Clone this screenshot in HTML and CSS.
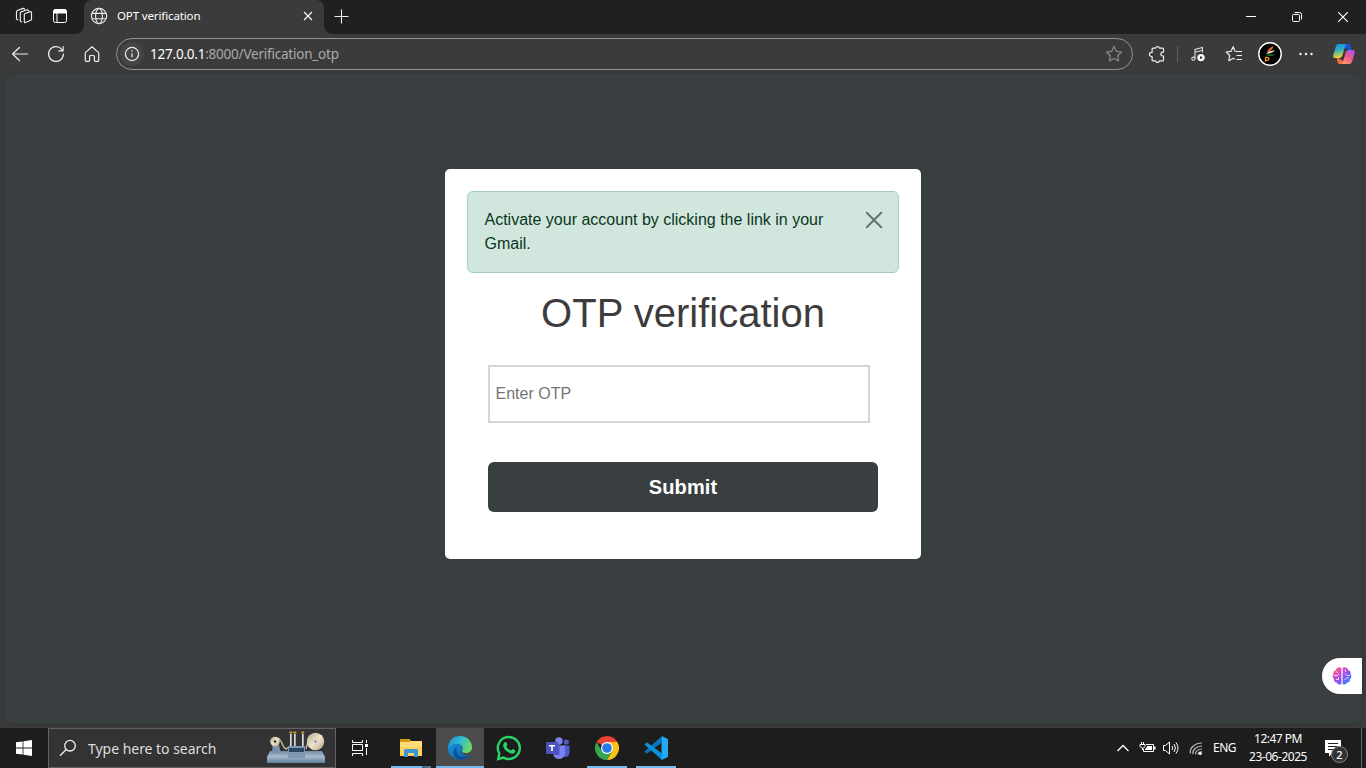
FILE: index.html
```html
<!DOCTYPE html>
<html lang="en">
<head>
<meta charset="utf-8">
<title>OPT verification</title>
<link rel="stylesheet" href="styles.css">
</head>
<body>
<div class="desktop">
  <header class="tabstrip">
    <span class="cell"><svg width="18" height="18" viewBox="0 0 18 18" fill="none" stroke="#eee" stroke-width="1.15" stroke-linejoin="round" stroke-linecap="round"><path d="M9.300 7.600c0-.5.3-.9.800-1.100l5.200-1.900c.7-.2 1.200.1 1.200.8v6.800c0 .5-.3.900-.8 1.100l-5.200 2.200c-.7.3-1.200-.1-1.200-.8z"/><path d="M6.600 14.800c-.7 0-1.300-.5-1.300-1.300V6.100c0-.6.4-1 .9-1.200l5-1.900c.9-.3 1.900 0 2.400.6"/><path d="M2.900 12.800c-.8 0-1.400-.6-1.400-1.300V4.800c0-.6.400-1.100.9-1.300l4.900-1.900c.9-.3 1.900 0 2.400.6"/></svg></span>
    <span class="cell"><svg width="16" height="16" viewBox="0 0 16 16" fill="none" stroke="#fff"><rect x="1.5" y="1.5" width="13" height="13" rx="2"/><path d="M1.5 3.3a2 2 0 012-1.8h9a2 2 0 012 1.8V5h-13z" fill="#fff"/><path d="M5 5v9.5"/></svg></span>
    <div class="tab">
      <svg width="18" height="18" viewBox="0 0 18 18" fill="none" stroke="#e8e8e8" stroke-width="1.15"><circle cx="9" cy="9" r="7.6"/><ellipse cx="9" cy="9" rx="3.4" ry="7.6"/><path d="M1.9 6.3h14.2M1.9 11.7h14.2"/></svg>
      <span class="tab-title">OPT verification</span>
      <svg class="tab-close" width="10" height="10" viewBox="0 0 10 10" stroke="#fff" stroke-width="1.1"><path d="M1 1l8 8M9 1L1 9"/></svg>
    </div>
    <span class="new-tab"><svg width="15" height="15" viewBox="0 0 15 15" stroke="#eee" stroke-width="1.1"><path d="M7.5.5v14M.5 7.5h14"/></svg></span>
    <div class="window-controls">
      <span><svg width="12" height="12" viewBox="0 0 12 12" stroke="#fff"><path d="M1 5.5h10"/></svg></span>
      <span><svg width="12" height="12" viewBox="0 0 12 12" fill="none" stroke="#fff"><rect x="1.5" y="3.5" width="7" height="7" rx="1"/><path d="M3.5 1.5h5a2 2 0 012 2v5"/></svg></span>
      <span><svg width="12" height="12" viewBox="0 0 12 12" stroke="#fff" stroke-width="1.15"><path d="M1.2 1.2l9.6 9.6M10.800 1.2l-9.6 9.6"/></svg></span>
    </div>
  </header>

  <nav class="toolbar">
    <span class="cell"><svg width="18" height="18" viewBox="0 0 18 18" fill="none" stroke="#eee" stroke-width="1.2" stroke-linecap="round" stroke-linejoin="round"><path d="M16.500 9H1.600M8.400 2.500L1.600 9l6.800 6.500"/></svg></span>
    <span class="cell"><svg width="18" height="18" viewBox="0 0 18 18" fill="none" stroke="#eee" stroke-width="1.2" stroke-linecap="round"><path d="M16.400 9A7.400 7.400 0 1114.700 4.300L16 5.700M16.100 1.500v4.300h-4.200"/></svg></span>
    <span class="cell"><svg width="18" height="18" viewBox="0 0 18 18" fill="none" stroke="#eee" stroke-width="1.2" stroke-linejoin="round"><path d="M2.300 7.600L9 1.800l6.700 5.800v7.800c0 .6-.4.9-.9.9h-2.600c-.5 0-.8-.3-.8-.8v-3.900c0-.7-.5-1.100-1.100-1.100H7.700c-.6 0-1.100.4-1.100 1.100v3.900c0 .5-.3.8-.8.8H3.200c-.5 0-.9-.3-.9-.9z"/></svg></span>
    <div class="address">
      <span class="site-info"><svg width="16" height="16" viewBox="0 0 16 16" fill="none" stroke="#eee"><circle cx="8" cy="8" r="6.6" stroke-width="1.2"/><path d="M8 7.200v4" stroke-width="1.2"/><circle cx="8" cy="5" r=".8" fill="#eee" stroke="none"/></svg></span>
      <span class="url"><b>127.0.0.1</b>:8000/Verification_otp</span>
      <svg class="favorite" width="18" height="18" viewBox="0 0 18 18" fill="none" stroke="#8c8c8c" stroke-width="1.2" stroke-linejoin="round"><path d="M9 1.500l2.300 4.800 5.200.7-3.800 3.700.9 5.300L9 13.500 4.400 16l.9-5.300L1.500 7l5.200-.7z"/></svg>
    </div>
    <span class="cell cell-after"><svg width="18" height="18" viewBox="0 0 18 18" fill="none" stroke="#eee" stroke-width="1.2" stroke-linejoin="round"><path d="M5 3.200h2.600a2 2 0 013.900 0h3.100c.5 0 .9.4.9.900v3.100h-.7a1.900 1.900 0 000 3.800h.7v4c0 .5-.4.900-.9.900h-3.100a2 2 0 01-3.900 0H5c-.5 0-.9-.4-.9-.9v-3.500h-.6a2 2 0 010-4.100h.6V4.100c0-.5.4-.9.900-.9z"/></svg></span>
    <i class="divider"></i>
    <span class="cell cell-music"><svg width="18" height="18" viewBox="0 0 18 18" fill="none" stroke="#ddd" stroke-width="1.1"><path d="M6 13.500V4.400l7.500-2v5M6 7.200l7.500-2"/><circle cx="4.400" cy="13.700" r="1.600"/><circle cx="12" cy="12.600" r="3.700" fill="#fff" stroke="none"/><path d="M11 10.900l3 1.700-3 1.700z" fill="#3b3b3b" stroke="none"/></svg></span>
    <span class="cell"><svg width="18" height="18" viewBox="0 0 18 18" fill="none" stroke="#eee" stroke-width="1.2" stroke-linejoin="round"><path d="M10.500 6.500H17M11.500 10.500H17M11.500 14.500H17M10.200 6.500L8.200 1.700 6 6.300 1.200 7l3.500 3.500-.9 5.200 4.400-2.400 1.500.8"/></svg></span>
    <span class="cell"><svg width="24" height="24" viewBox="0 0 24 24"><circle cx="12" cy="12" r="11.2" fill="#000" stroke="#fff" stroke-width="1.4"/><path d="M9 10.500C10 7 12.500 5.500 15.500 4 15 7 12.500 9 9 10.500z" fill="#f26a2b"/><path d="M8 11.800c2.300-2.300 5-3.400 9-3.200-2.500 2.300-6 3-9 3.200z" fill="#eee"/><path d="M7.500 12.900c3.300-.7 6.400-1.200 10-.2-3 1.700-6.500 1.200-10 .2z" fill="#20872f"/><path d="M7.500 19.800v-4.300h2a1.400 1.400 0 010 2.800H8" fill="none" stroke="#ee8b20" stroke-width="1.3"/></svg></span>
    <span class="cell"><svg width="16" height="4" viewBox="0 0 16 4" fill="#eee"><circle cx="2.500" cy="2" r="1.25"/><circle cx="8" cy="2" r="1.25"/><circle cx="13.500" cy="2" r="1.25"/></svg></span>
    <span class="cell cell-copilot"><svg width="24" height="22" viewBox="0 0 24 22"><defs><linearGradient id="cpa" x1="0" y1="0" x2=".2" y2="1"><stop offset="0" stop-color="#168cf0"/><stop offset=".5" stop-color="#31b0bb"/><stop offset="1" stop-color="#edd333"/></linearGradient><linearGradient id="cpb" x1=".8" y1="0" x2=".2" y2="1"><stop offset="0" stop-color="#a653ef"/><stop offset=".5" stop-color="#ef568e"/><stop offset="1" stop-color="#ff9d69"/></linearGradient></defs><path d="M12 1h4.200c1.300 0 1.800.7 2.100 1.700L19.700 7h-3.500l-4-3z" fill="#1755d8"/><path d="M4.500 14l6.300 3.800 1.200 3.200H7.700c-1.200 0-1.800-.8-2.100-1.800z" fill="#f26a44"/><path d="M6.700 1H15c-1.200.3-1.700 1.400-2.100 2.800L10.800 11c-.8 2.700-1.700 4-4 4H3.400c-2 0-2.700-1.400-2-3.600L3.700 4C4.400 2 5.200 1 6.700 1z" fill="url(#cpa)"/><path d="M17.300 21H9c1.200-.3 1.700-1.400 2.100-2.800l2.100-7.200c.8-2.700 1.700-4 4-4h3.400c2 0 2.700 1.400 2 3.600L20.300 18c-.7 2-1.500 3-3 3z" fill="url(#cpb)"/></svg></span>
  </nav>

  <main class="page">
    <section class="card">
      <div class="alert">
        <p>Activate your account by clicking the link in your Gmail.</p>
        <svg width="18" height="18" viewBox="0 0 18 18" stroke="#68736e" stroke-width="2" stroke-linecap="round"><path d="M1.800 1.800l14.400 14.400M16.200 1.800L1.800 16.200"/></svg>
      </div>
      <h1>OTP verification</h1>
      <input class="otp" type="text" placeholder="Enter OTP">
      <button class="submit" type="button">Submit</button>
    </section>
    <div class="assistant"><svg width="20" height="20" viewBox="0 0 20 20"><defs><linearGradient id="brain" x1="0" y1="0" x2="1" y2="1"><stop offset="0" stop-color="#ff8a3b"/><stop offset=".3" stop-color="#e44bc3"/><stop offset=".6" stop-color="#8155f5"/><stop offset="1" stop-color="#2196fa"/></linearGradient></defs><path d="M9.400 2v16c-2 1.100-4.100.3-4.600-1.500-2 0-3-1.500-2.600-3.100C.3 12.400.2 9 1.500 8 .9 6.100 2 4.500 3.700 4.300 4.300 1.500 7.500.3 9.400 2zM10.600 2v16c2 1.100 4.100.3 4.600-1.500 2 0 3-1.500 2.600-3.100 1.900-1 2-4.400.7-5.400.6-1.900-.5-3.500-2.200-3.700C15.700 1.500 12.500.3 10.600 2z" fill="url(#brain)"/><path d="M2 9.500h3.500L7 8M4.500 5.500L6 7M4 13.500h2.500V11M18 9.500h-3L13 7.500M12.500 14l2-2h2M13.500 3.500V6" fill="none" stroke="#fff" stroke-width=".8"/></svg></div>
  </main>

  <footer class="taskbar">
    <span class="task-cell"><svg width="16" height="16" viewBox="0 0 16 16" fill="#fff"><path d="M0 2.300l6.600-.9v6.200H0zM7.400 1.300L16 0v7.600H7.400zM0 8.400h6.600v6.200L0 13.700zM7.400 8.400H16V16l-8.600-1.300z"/></svg></span>
    <div class="search">
      <svg width="18" height="18" viewBox="0 0 18 18" fill="none" stroke="#eee" stroke-width="1.3"><circle cx="11" cy="6.700" r="5.300"/><path d="M7.200 10.500L1 16.700"/></svg>
      <span>Type here to search</span>
      <svg class="search-art" width="60" height="36" viewBox="0 0 60 36"><defs><linearGradient id="steel" x1="0" y1="0" x2="0" y2="1"><stop offset="0" stop-color="#718ba8"/><stop offset=".45" stop-color="#a9bacb"/><stop offset="1" stop-color="#607e9c"/></linearGradient><linearGradient id="disc" x1="0" y1="0" x2="1" y2="1"><stop offset="0" stop-color="#b3a68b"/><stop offset=".5" stop-color="#eee4cb"/><stop offset="1" stop-color="#b4a488"/></linearGradient></defs><path d="M4 21h52l3 6v6H1v-6z" fill="url(#steel)"/><path d="M6 23l1-12h5l3 12z" fill="#7890aa"/><path d="M12 8c5 3 4 10 8 11l4-3M40 19L43 8" fill="none" stroke="#c9bea6" stroke-width="1.300"/><circle cx="9" cy="11.500" r="4.800" fill="url(#disc)"/><circle cx="9" cy="11.500" r="1.200" fill="#222"/><g fill="#d5dce0"><path d="M24 4h1.700v14H24zM28 4h1.700v14H28zM36 4h1.700v14H36z"/></g><path d="M23.300 1.500h3v2h-3zM27.300 1.500h3v2h-3zM35.300 1.500h3v2h-3z" fill="#c99b38"/><path d="M22 16h17v12H22z" fill="#8199b1"/><path d="M23 18h15v4H23z" fill="#294963"/><circle cx="49.500" cy="11.500" r="8.700" fill="url(#disc)"/><circle cx="49.500" cy="11.500" r="2.200" fill="#d3c9dc"/><circle cx="49.500" cy="11.500" r=".7" fill="#554b5c"/></svg>
    </div>
    <span class="task-cell"><svg width="18" height="18" viewBox="0 0 18 18" fill="none" stroke="#fff"><path d="M1.500 1v2.500h10V1M1.500 17v-2.500h10V17M1.500 5.500h10v6h-10zM15.500 1v3M15.500 9v7"/><path d="M14 5h3v3h-3z" fill="#fff" stroke="none"/></svg></span>
    <div class="apps">
      <span class="app running stacked"><svg width="22" height="20" viewBox="0 0 22 20"><path d="M0 1h9l2 2h11v15H0z" fill="#ffd35b"/><path d="M0 1h9l1 3H0z" fill="#d99a13"/><path d="M0 4h10l1-1h11v6H0z" fill="#ffdc76"/><path d="M4 19v-7l1-1h12l1 1v7h-4v-4H8v4z" fill="#3c97d5"/></svg></span>
      <span class="app running active"><svg width="26" height="26" viewBox="0 0 26 26"><defs><linearGradient id="edgeTop" x1="0" y1=".3" x2="1" y2=".6"><stop offset="0" stop-color="#2391d3"/><stop offset=".5" stop-color="#31bdd3"/><stop offset="1" stop-color="#75dc59"/></linearGradient><linearGradient id="edgeBlue" x1="0" y1="0" x2="1" y2="1"><stop offset="0" stop-color="#1595dc"/><stop offset="1" stop-color="#0b5caa"/></linearGradient></defs><path d="M1 13C2 8 9 5 14 9l1 5-1 3c2 4 6 4 9.300 2.400C21 23 17.500 25 13.200 25A12 12 0 011 13z" fill="url(#edgeBlue)"/><path d="M1 13C1.300 5.500 6.400 1 13 1c7.500 0 12 5.500 12 11.200 0 3.600-2.800 5.800-6 5.800-2.400 0-4.300-.8-4.300-2 0-.6 1-.9 1-2.600 0-2.700-2.600-4.600-5.500-4.600C6.100 8.800 2.900 10 1 13z" fill="url(#edgeTop)"/><path d="M10.500 11.200c-3.200 4 .1 10.500 5.500 10.500 3.100 0 5.500-1 7.300-2.300C21.200 23 17.500 25 13.200 25c-6-.7-9.700-9.800-2.700-13.800z" fill="#124f91"/></svg></span>
      <span class="app"><svg width="26" height="26" viewBox="0 0 26 26"><path d="M3.300 18.500A11 11 0 117.500 22.600L2.200 24z" fill="none" stroke="#25d366" stroke-width="2.400"/><path d="M8.800 7.200c.4-.4 1.300-.5 1.600.2l.9 2.200c.2.500-.9 1.500-.9 1.800 1.200 2 2.500 3.200 4.500 4 .5.200 1.300-1.500 1.900-1.300l2.300 1.100c.7.300.1 2-.5 2.600-1.200 1.200-3.200 1.100-5.300 0-2.800-1.300-4.400-3.100-5.700-5.400-1-1.800-.4-4 1.200-5.200z" fill="#25d366"/></svg></span>
      <span class="app"><svg width="26" height="24" viewBox="0 0 26 24"><circle cx="14" cy="5" r="3.700" fill="#7b83eb"/><circle cx="21.300" cy="6" r="2.600" fill="#5059c9"/><path d="M17 9.500h7.500V17c0 2.300-1.800 4-4 4S17 20 17 17z" fill="#5059c9"/><path d="M8 9.500h12V17c0 3.500-2.500 6-6 6s-6-2.500-6-6z" fill="#7b83eb"/><path d="M8 9.500h6.500V19H8z" fill="#5059c9"/><rect x="1" y="6" width="12" height="12" rx="1" fill="#4b53bc"/><path d="M4 9h6v1.500H7.800V15H6.200v-4.500H4z" fill="#fff"/></svg></span>
      <span class="app running"><svg width="26" height="26" viewBox="0 0 26 26"><path d="M13 13L2.600 7A12 12 0 0123.400 7z" fill="#ea4335"/><path d="M13 7h10.400A12 12 0 0113 25l5.200-9z" fill="#fbc116"/><path d="M7.800 16L2.600 7A12 12 0 0013 25l5.200-9z" fill="#34a853"/><circle cx="13" cy="13" r="6" fill="#fff"/><circle cx="13" cy="13" r="4.800" fill="#2978e8"/></svg></span>
      <span class="app running"><svg width="26" height="26" viewBox="0 0 26 26"><path d="M18.500 1L25 4v18l-6.500 3z" fill="#25a8f2"/><path d="M19 1L1.500 16.500l2.200 2.300L19 7.500z" fill="#0874bd"/><path d="M19 25L1.500 9.500l2.200-2.300L19 18.500z" fill="#0c91db"/></svg></span>
    </div>
    <div class="tray">
      <svg class="chevron" width="14" height="10" viewBox="0 0 14 10" fill="none" stroke="#fff" stroke-width="1.300"><path d="M1.500 8L7 2.500 12.500 8"/></svg>
      <svg class="battery" width="18" height="14" viewBox="0 0 18 14" fill="none" stroke="#fff"><path d="M7 3.500h7.500v7h-10V8"/><path d="M8 5h5v4H6V8l2-2zM15 5.500h1.500v3H15z" fill="#fff" stroke="none"/><path d="M1 3.500h5v2L4.500 7h-2L1 5.500zM2.500 3V1M4.500 3V1M3.500 7v2"/></svg>
      <svg class="volume" width="18" height="16" viewBox="0 0 18 16" fill="none" stroke="#fff"><path d="M1.500 5.500h2L7.500 2v12l-4-3.500h-2z"/><path d="M10 6q1.500 2 0 4M12 4q3 4 0 8M14 2.500q4 5.500 0 11"/></svg>
      <svg class="wifi" width="16" height="16" viewBox="0 0 16 16" fill="none" stroke="#bbb" stroke-width="1.200"><path d="M2.500 13.500C1 8 7 3 14 3M5 14c-1-4 3.500-8 9-8M7.500 14.300C7 11.500 10 9 14 9M10 14.500c0-1.700 1.500-2.700 4-2.700"/><circle cx="12.300" cy="13.500" r="1.500" fill="#fff" stroke="none"/></svg>
      <span class="language">ENG</span>
      <div class="clock"><span class="time">12:47 PM</span><span class="date">23-06-2025</span></div>
      <div class="notice"><svg width="18" height="18" viewBox="0 0 18 18"><path d="M1 1h16v13H9l-4 3.500V14H1z" fill="#fff"/><path d="M4 4.500h10M4 7.500h10M4 10.500h6" stroke="#222"/></svg><b>2</b></div>
      <i class="show-desktop"></i>
    </div>
  </footer>
</div>
</body>
</html>
```

FILE: styles.css
```css
* { box-sizing: border-box; }
body { margin: 0; font-family: "Noto Sans", sans-serif; background: #3b3b3b; overflow: hidden; }
svg { display: block; flex: none; }
.desktop { display: flex; flex-direction: column; width: 1366px; height: 768px; }

.tabstrip { display: flex; height: 34px; padding-left: 6px; background: #202020; }
.cell { display: flex; flex: none; align-items: center; justify-content: center; width: 36px; }
.tabstrip .cell { height: 32px; }
.tab { position: relative; display: flex; align-items: center; width: 240px; height: 34px; margin-left: 6px; padding: 0 11px 2px 6px; background: #3b3b3b; border-radius: 8px 8px 0 0; }
.tab::before, .tab::after { content: ""; position: absolute; bottom: 0; width: 8px; height: 8px; }
.tab::before { left: -8px; background: radial-gradient(circle at 0 0, transparent 7.5px, #3b3b3b 8px); }
.tab::after { right: -8px; background: radial-gradient(circle at 100% 0, transparent 7.5px, #3b3b3b 8px); }
.tab-title { margin: 0 0 2px 9px; color: #fff; font-size: 11.5px; letter-spacing: -.13px; white-space: nowrap; }
.tab-close { margin-left: auto; }
.new-tab { display: flex; align-items: center; justify-content: center; width: 34px; height: 32px; }
.window-controls { display: flex; margin-left: auto; }
.window-controls span { display: flex; align-items: center; justify-content: center; width: 46px; height: 34px; }

.toolbar { display: flex; align-items: center; height: 40px; padding-left: 2px; background: #3b3b3b; }
.address { display: flex; align-items: center; width: 1017px; height: 32px; margin-left: 6px; padding: 0 9px 0 3px; border: 1px solid #929292; border-radius: 16px; }
.site-info { display: flex; align-items: center; justify-content: center; width: 24px; height: 24px; background: #454545; border-radius: 50%; }
.url { margin-left: 6px; color: #aaa; font-size: 13.5px; letter-spacing: -.22px; white-space: nowrap; }
.url b { color: #fff; font-weight: 400; }
.favorite { margin-left: auto; }
.cell-after { margin-left: 6px; }
.divider { width: 1px; height: 16px; margin: 0 2px; background: #606060; }
.cell-copilot { width: 40px; }

.page { position: relative; display: flex; justify-content: center; align-items: flex-start; height: 650px; margin: 0 4px 4px; padding-top: 95px; background: #393e41; border-radius: 8px; box-shadow: 0 0 2px #292929; }
.card { display: flex; flex-direction: column; width: 476px; height: 390px; padding: 22px; background: #fff; border-radius: 5px; font-family: "Liberation Sans", Arial, sans-serif; }
.alert { display: flex; justify-content: space-between; height: 82px; padding: 16px 15px 0 16.5px; color: #0a3622; background: #d1e7dd; border: 1px solid #a3cfbb; border-radius: 6px; }
.alert p { width: 360px; margin: 0; font-size: 16px; line-height: 24px; }
.alert svg { margin-top: 3px; }
h1 { margin: 16px 0 0; color: #3d3b3c; font-size: 40px; font-weight: 400; line-height: 48px; text-align: center; }
.otp { width: 382px; height: 58px; margin: 28px 0 0 21px; padding: 0 5px 0 5.5px; border: 2px solid #d8d3d4; font: 16px "Liberation Sans", Arial, sans-serif; }
.otp::placeholder { color: #757575; }
.submit { width: 390px; height: 50px; margin: 39px 0 0 21px; padding: 0; color: #fff; background: #393e41; border: 0; border-radius: 6px; font: bold 20px "Liberation Sans", Arial, sans-serif; letter-spacing: .15px; }
.assistant { position: absolute; right: 0; bottom: 30px; display: flex; align-items: center; justify-content: center; width: 40px; height: 36px; background: #fff; border-radius: 18px 0 0 18px; }

.taskbar { display: flex; height: 40px; color: #fff; background: #1d1d1d; }
.task-cell { display: flex; flex: none; align-items: center; justify-content: center; width: 48px; }
.search { display: flex; align-items: center; width: 288px; padding: 0 9px 0 10px; background: #333; border: 1px solid #626262; color: #ddd; }
.search span { margin-left: 11px; font-size: 14px; letter-spacing: -.03px; white-space: nowrap; }
.search-art { margin-left: auto; }
.apps { display: flex; gap: 1px; margin-left: 3px; }
.app { display: flex; align-items: center; justify-content: center; width: 48px; height: 40px; }
.running { background: linear-gradient(#76b9ed, #76b9ed) 4px 38px / 40px 2px no-repeat; }
.stacked { background: linear-gradient(90deg, #76b9ed 31px, #41627b 31px, #527f9f 40px) 4px 38px / 40px 2px no-repeat; }
.active { background: linear-gradient(#76b9ed, #76b9ed) 0 38px / 48px 2px no-repeat, #4c4c4c; }
.tray { display: flex; align-items: center; margin-left: auto; width: 250px; }
.battery { margin-left: 9px; }
.volume { margin-left: 5px; }
.wifi { margin-left: 8px; }
.language { width: 25px; margin: 0 0 2px 9px; font-size: 12px; letter-spacing: -.5px; white-space: nowrap; }
.clock { display: flex; flex-direction: column; align-items: center; width: 62px; margin-left: 9px; font-size: 12px; line-height: 18px; white-space: nowrap; }
.time { letter-spacing: -.5px; }
.date { letter-spacing: -.47px; }
.notice { position: relative; width: 18px; margin-left: 15px; }
.notice b { position: absolute; left: 7px; top: 7px; width: 17px; height: 17px; background: #333; border: 1px solid #888; border-radius: 50%; font-size: 11px; font-weight: 500; line-height: 15px; text-align: center; }
.show-desktop { width: 1px; height: 40px; margin-left: auto; margin-right: 4px; background: #666; }
```
